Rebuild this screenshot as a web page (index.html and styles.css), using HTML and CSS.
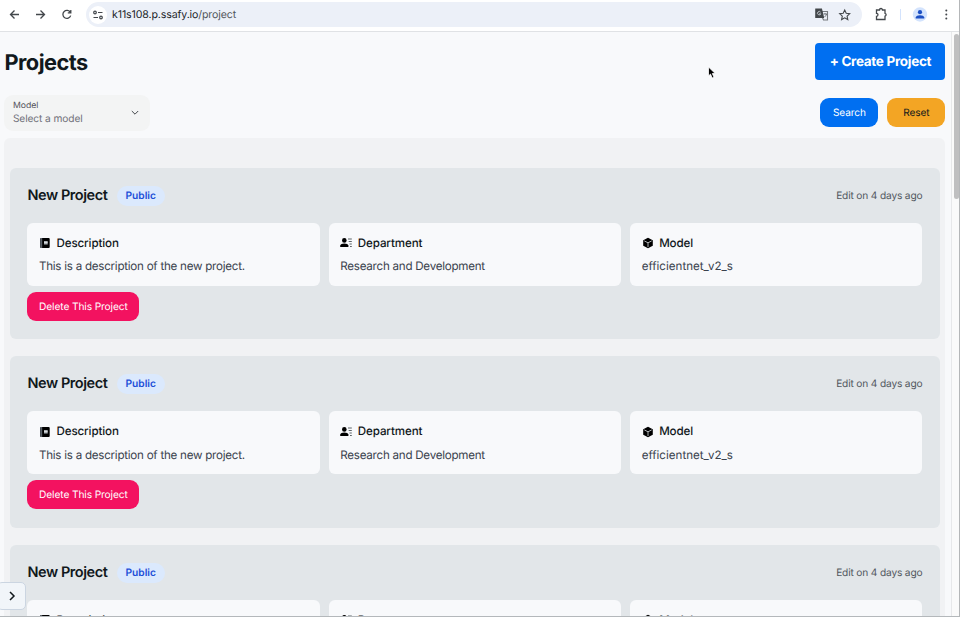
FILE: index.html
```html
<!DOCTYPE html>
<html lang="en">
<head>
<meta charset="utf-8">
<title>Projects</title>
<link rel="stylesheet" href="styles.css">
</head>
<body>
<svg width="0" height="0" class="defs">
  <symbol id="book" viewBox="0 0 12 12"><path d="M1 1.5h1.5v9H1zM3 1h6.700q1 0 1 1v8q0 1-1 1H3z"/><path d="M1.2 1h2v10h-2z" fill="#596068"/><path d="M5 4h3.7v3.5H5z" fill="#a9afb3"/><path d="M5 5.6h3.7" stroke="#fff" stroke-width=".6"/></symbol>
  <symbol id="person" viewBox="0 0 12 12"><circle cx="4.3" cy="3.4" r="2.3"/><path d="M.2 10V8.600Q.7 6.400 4.300 6.400T8.400 8.600V10z"/><path d="M8 2h3.800M8.700 4.500h3.100M9.500 7h2.300M10 9.500h1.800" stroke="#4b5258" stroke-width=".9"/></symbol>
  <symbol id="cube" viewBox="0 0 12 12"><path d="M6 .8 10.800 3.200V8.800L6 11.300 1.200 8.800V3.200z"/><path d="M2.300 3.900 6 5.800l3.700-1.900M6 5.800V10" fill="none" stroke="#d9dee1" stroke-width=".8"/></symbol>
</svg>
<div class="window">
  <header class="browser">
    <svg class="nav" viewBox="0 0 80 28" width="80" height="28" fill="none" stroke="#43474b" stroke-width="1.300"><path d="M19 14.500h-8.500m4-4-4 4 4 4M36 14.500h8.500m-4-4 4 4-4 4M70.400 12.400a4 4 0 1 0 .3 3.200M70.800 10v2.900h-3"/></svg>
    <div class="address">
      <span class="site"><svg viewBox="0 0 18 18" width="18" height="18" fill="none" stroke="#43474b" stroke-width="1.200"><circle cx="6" cy="6.500" r="1.300"/><path d="M9 6.500h4.500M4.500 11.500H9"/><circle cx="12" cy="11.500" r="1.300"/></svg></span>
      <span class="url">k11s108.p.ssafy.io<span>/project</span></span>
      <svg class="tools" viewBox="0 0 38 18" width="38" height="18" fill="none" stroke="#43474b" stroke-width="1.100"><path d="M6.500 5.500h6v8.500H8.500L7 10.500" stroke="#777b7f"/><path d="M.8 3h5.700l2 8.500H.8z" fill="#43474b"/><path d="M5.600 6.200a1.700 1.700 0 1 0 .2 1.600H4.200" stroke="#dce2e9" stroke-width=".8"/><path d="M8.500 8h3.500m-2-.8V8m1.500 0q-.5 2-2 3" stroke-width=".7"/><path d="m29.700 4 1.500 3.300 3.500.4-2.600 2.400.7 3.500-3.100-1.800-3.100 1.800.7-3.500-2.600-2.400 3.500-.4z"/></svg>
    </div>
    <svg class="actions" viewBox="0 0 90 28" width="90" height="28"><path d="M6.500 10h3a1.500 1.500 0 0 1 3 0h2.500v3.300a1.500 1.500 0 0 1 0 2.900v3.300H6.500v-3.200q1.500 0 1.500-1.500t-1.500-1.500z" fill="none" stroke="#43474b" stroke-width="1.300"/><path d="M30.500 9v11" stroke="#d3e3fd"/><circle cx="50" cy="14.500" r="7.200" fill="#d3e3fd"/><circle cx="50" cy="12.200" r="2.100" fill="#1b4fc4"/><path d="M45.700 18.500v-1q.7-2.200 4.300-2.200t4.300 2.200v1z" fill="#1b4fc4"/><g fill="#43474b"><circle cx="76.300" cy="10.600" r="1"/><circle cx="76.300" cy="14.500" r="1"/><circle cx="76.300" cy="18.400" r="1"/></g></svg>
  </header>
  <div class="viewport">
    <main>
      <div class="heading"><h1>Projects</h1><button class="create">+ Create Project</button></div>
      <div class="filters">
        <div class="select"><div><span class="label">Model</span><span class="value">Select a model</span></div><svg viewBox="0 0 10 10" width="10" height="10" fill="none" stroke="#43474b"><path d="m1.800 3 3.200 3.200 3.200-3.200"/></svg></div>
        <div class="buttons"><button class="search">Search</button><button class="reset">Reset</button></div>
      </div>
      <div class="list">
        <article class="project">
          <div class="top"><h2>New Project</h2><span class="pill">Public</span><time>Edit on 4 days ago</time></div>
          <div class="facts">
            <section><h3><svg><use href="#book"/></svg>Description</h3><p>This is a description of the new project.</p></section>
            <section><h3><svg><use href="#person"/></svg>Department</h3><p>Research and Development</p></section>
            <section><h3><svg><use href="#cube"/></svg>Model</h3><p class="identifier">efficientnet_v2_s</p></section>
          </div>
          <button class="delete">Delete This Project</button>
        </article>
        <article class="project">
          <div class="top"><h2>New Project</h2><span class="pill">Public</span><time>Edit on 4 days ago</time></div>
          <div class="facts">
            <section><h3><svg><use href="#book"/></svg>Description</h3><p>This is a description of the new project.</p></section>
            <section><h3><svg><use href="#person"/></svg>Department</h3><p>Research and Development</p></section>
            <section><h3><svg><use href="#cube"/></svg>Model</h3><p class="identifier">efficientnet_v2_s</p></section>
          </div>
          <button class="delete">Delete This Project</button>
        </article>
        <article class="project">
          <div class="top"><h2>New Project</h2><span class="pill">Public</span><time>Edit on 4 days ago</time></div>
          <div class="facts">
            <section><h3><svg><use href="#book"/></svg>Description</h3></section>
            <section><h3><svg><use href="#person"/></svg>Department</h3></section>
            <section><h3><svg><use href="#cube"/></svg>Model</h3></section>
          </div>
        </article>
      </div>
    </main>
    <div class="scroll"><div class="thumb"></div></div>
  </div>
  <button class="drawer" aria-label="Open"><svg viewBox="0 0 12 12" width="12" height="12" fill="none" stroke="#11181c" stroke-width="1.500"><path d="m4 2 4 4-4 4"/></svg></button>
  <svg class="cursor" viewBox="0 0 10 14" width="10" height="14"><path d="M1.500 1v9l2-1.900 1.700 3.900 1.800-.8-1.700-3.700h2.900z" fill="#000" stroke="#fff" stroke-width=".8"/></svg>
</div>
</body>
</html>
```
FILE: styles.css
```css
* { box-sizing: border-box; }
body { margin: 0; font-family: Inter, sans-serif; color: #11181c; overflow: hidden; text-rendering: geometricPrecision; }
h1, h2, h3, p { margin: 0; }
svg { display: block; flex: none; }
.defs { position: absolute; }
button { border: 0; padding: 0; font-family: inherit; white-space: nowrap; text-rendering: inherit; }
.window { position: relative; width: 960px; height: 617px; overflow: hidden; display: flex; flex-direction: column; border-right: 1px solid #b4b6b8; border-bottom: 1px solid #b4b8bb; background: #fff; }
.browser { height: 32px; flex: none; display: flex; align-items: flex-start; border-bottom: 1px solid #e0e2e5; }
.address { margin: 2px 0 0 6px; width: 776px; height: 25px; flex: none; display: flex; align-items: center; border-radius: 13px; background: #ecf0f8; padding: 0 9px 0 3px; }
.site { width: 18px; height: 18px; border-radius: 50%; background: #fff; }
.url { margin-left: 5px; font-size: 10.6px; line-height: 16px; letter-spacing: -.12px; color: #202327; }
.url span { color: #51565b; }
.tools { margin-left: auto; }
.actions { margin-left: 8px; }
.viewport { flex: 1; min-height: 0; display: flex; background: #f8f9fb; }
main { flex: 1; min-width: 0; padding: 10.500px 5.600px 0 4.400px; overflow: hidden; }
.heading, .filters { display: flex; align-items: center; justify-content: space-between; }
.heading { height: 38px; }
h1 { padding-top: 2px; font-size: 21.75px; line-height: 26px; font-weight: 700; letter-spacing: -.5px; }
.create { width: 130px; height: 37px; padding-top: 1px; border-radius: 4px; background: #006ff1; color: #fff; font-size: 13.500px; font-weight: 700; letter-spacing: -.3px; }
.filters { height: 36px; margin-top: 14px; }
.select { width: 146px; height: 36px; border-radius: 9px; background: #f3f4f4; display: flex; align-items: center; justify-content: space-between; padding: 0 10px 0 8.500px; }
.select span { display: block; }
.label { padding-top: 1px; font-size: 8.7px; line-height: 11px; color: #52525b; }
.value { font-size: 10.2px; line-height: 14px; letter-spacing: -.1px; color: #71717a; }
.buttons { display: flex; gap: 9px; margin-top: -1px; }
.search, .reset { width: 58px; height: 29px; padding-top: 1px; border-radius: 9px; font-size: 10.1px; letter-spacing: -.1px; }
.search { background: #006ff1; color: #fff; }
.reset { background: #f3a524; color: #11181c; }
.list { margin-top: 7.500px; border-radius: 6px; background: #f1f2f4; padding: 29.500px 5.400px 0; display: flex; flex-direction: column; gap: 17px; }
.project { height: 171.500px; flex: none; border-radius: 6px; background: #e2e6e9; padding: 17.500px 17.600px; }
.top { display: flex; align-items: center; height: 21px; }
h2 { font-size: 14.500px; line-height: 20px; font-weight: 600; letter-spacing: -.42px; }
.pill { margin-left: 9px; height: 20px; padding: 0 9px; border-radius: 10px; background: #dbe9fd; color: #1d4fd8; font-size: 10.2px; line-height: 20px; font-weight: 600; }
time { margin-left: auto; font-size: 10.2px; letter-spacing: -.17px; color: #52585f; }
.facts { margin-top: 16.500px; display: grid; grid-template-columns: repeat(3, 1fr); gap: 9px; }
section { height: 63.400px; border-radius: 6px; background: #f8f9fb; padding: 12px 11.600px 0; }
h3 { display: flex; align-items: center; gap: 5.500px; font-size: 11.6px; line-height: 17px; font-weight: 500; letter-spacing: -.12px; }
h3 svg { width: 12px; height: 12px; }
p { margin-top: 6.500px; font-size: 11.6px; line-height: 17px; letter-spacing: -.25px; color: #3a424d; white-space: nowrap; }
.identifier { letter-spacing: 0; }
.delete { display: block; margin-top: 6px; width: 112px; height: 29px; padding-top: 1px; border-radius: 9px; background: #f31260; color: #fff; font-size: 10.2px; letter-spacing: -.12px; }
.scroll { width: 8px; flex: none; border-left: 1px solid #e7e8ea; background: #fafafa; padding: 2px 0 0 2px; }
.thumb { height: 165px; border-radius: 4px; background: #bfbfc0; }
.drawer { position: absolute; left: -3px; top: 582px; width: 29px; height: 28px; display: flex; align-items: center; justify-content: center; border: 1px solid #cbd5e1; border-radius: 5px; background: #f1f5f9; }
.cursor { position: absolute; left: 707px; top: 66px; }
```
